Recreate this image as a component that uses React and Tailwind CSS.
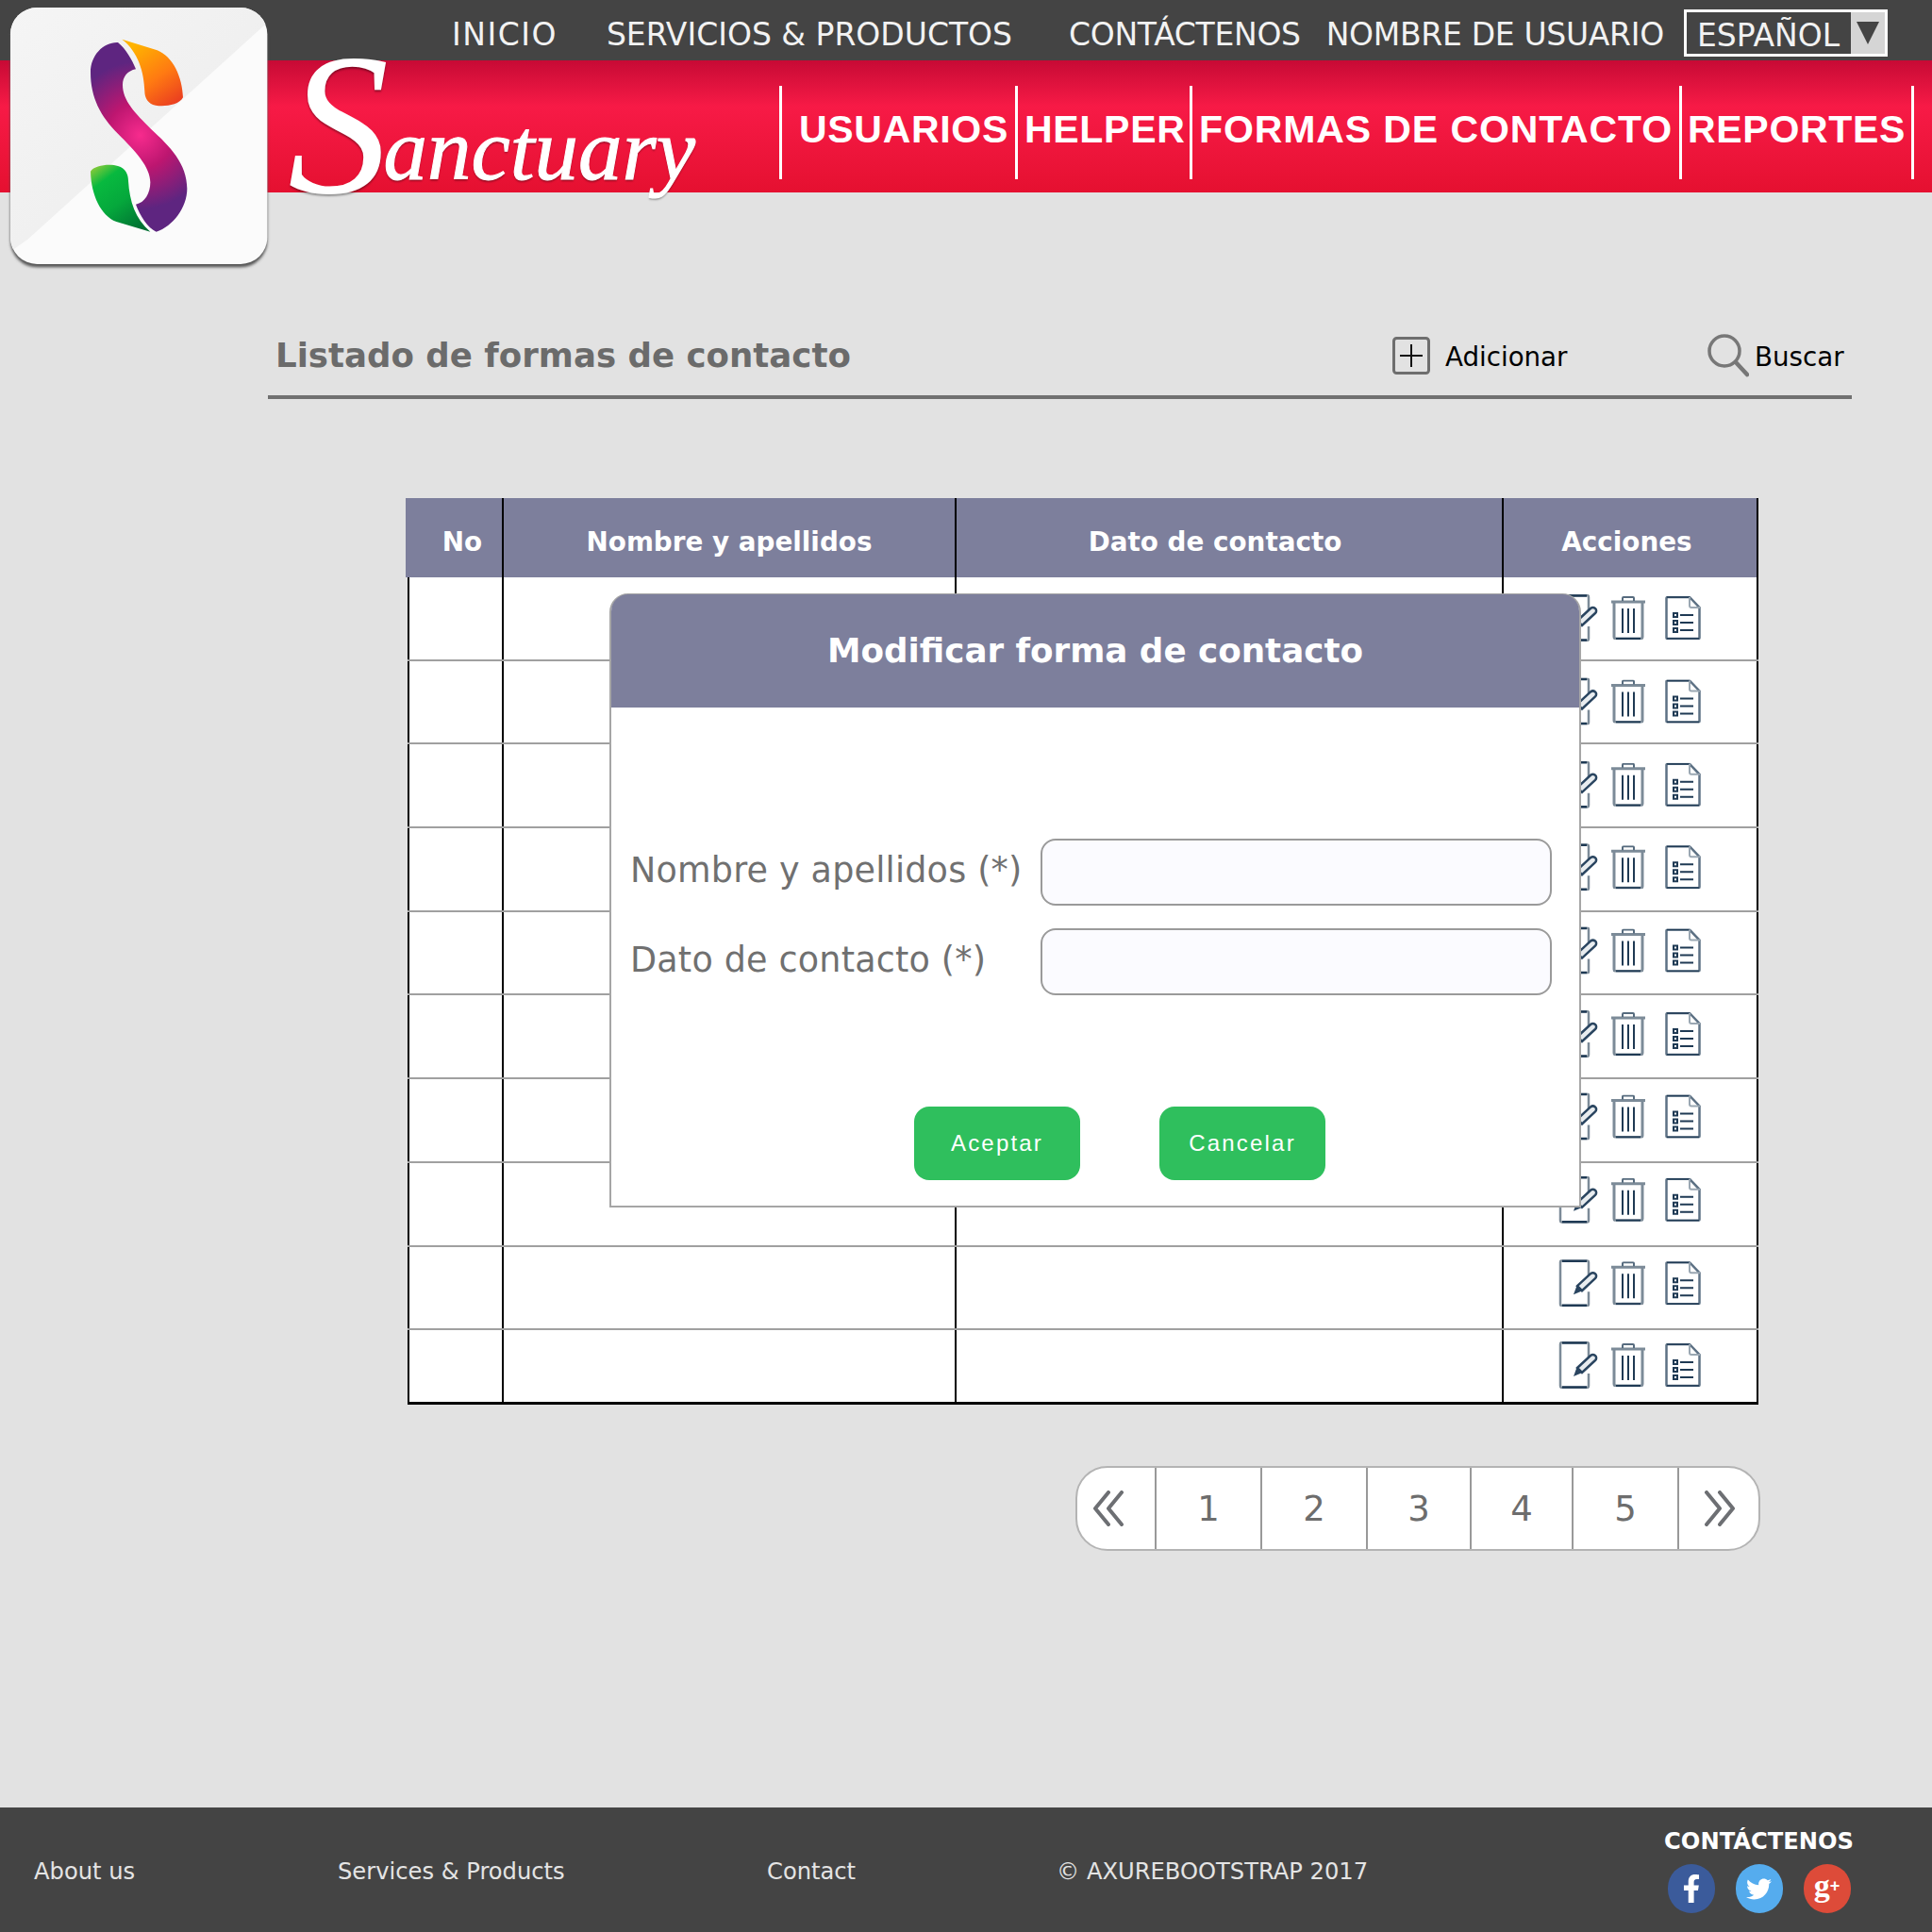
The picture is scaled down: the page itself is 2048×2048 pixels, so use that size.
import React from 'react';
import { FaFacebookF, FaTwitter } from 'react-icons/fa';

const rows = [0, 1, 2, 3, 4, 5, 6, 7, 8];

const LogoMark = () => (
  <svg viewBox="0 0 900 900" className="absolute left-0 top-0 w-[300px] h-[300px]">
    <defs>
      <radialGradient id="ribbon" gradientUnits="userSpaceOnUse" cx="445" cy="430" r="235">
        <stop offset="0" stopColor="#f72b8d" />
        <stop offset="0.45" stopColor="#bd1670" />
        <stop offset="1" stopColor="#5e2580" />
      </radialGradient>
      <linearGradient id="orange" x1="0.25" y1="0.05" x2="0.85" y2="1">
        <stop offset="0" stopColor="#ffb400" />
        <stop offset="0.55" stopColor="#ff7a12" />
        <stop offset="1" stopColor="#ea3d20" />
      </linearGradient>
      <linearGradient id="green" x1="0.15" y1="0" x2="0.8" y2="1">
        <stop offset="0" stopColor="#7cc83a" />
        <stop offset="0.2" stopColor="#08b93f" />
        <stop offset="0.55" stopColor="#05a83c" />
        <stop offset="1" stopColor="#006e32" />
      </linearGradient>
      <linearGradient id="shade" x1="0" y1="0" x2="0.6" y2="0.6">
        <stop offset="0" stopColor="#f5f5f5" />
        <stop offset="1" stopColor="#efefef" />
      </linearGradient>
      <clipPath id="card">
        <rect x="33" y="24" width="817" height="816" rx="85" />
      </clipPath>
      <filter id="soft" x="-5%" y="-5%" width="110%" height="110%">
        <feGaussianBlur stdDeviation="5" />
      </filter>
    </defs>
    <rect x="33" y="34" width="817" height="816" rx="85" fill="#555555" filter="url(#soft)" />
    <rect x="33" y="24" width="817" height="816" rx="85" fill="#fbfbfb" />
    <polygon points="33,24 850,24 850,72 90,760 33,800" fill="url(#shade)" clipPath="url(#card)" />
    <path d="M375 135C400 155 420 190 432 220C405 225 390 245 390 270C390 320 430 360 480 410C540 465 595 520 595 600C595 660 550 720 497 737C470 725 445 685 432 650C460 645 478 615 478 580C478 530 430 480 375 425C320 370 288 310 288 230C288 175 330 133 375 135Z" fill="url(#ribbon)" />
    <path d="M388 125L500 160C550 180 580 245 582 310C570 335 520 340 495 335C470 330 460 310 460 290C458 230 440 165 388 125Z" fill="url(#orange)" />
    <path d="M478 737L370 705C320 685 290 620 288 545C300 525 350 520 375 528C400 535 408 555 408 575C412 640 430 695 478 737Z" fill="url(#green)" />
  </svg>
);

const EditIcon = () => (
  <svg viewBox="0 0 44 50" className="w-[44px] h-[50px]" fill="none">
    <path d="M32 17V3a2 2 0 0 0-2-2H4a2 2 0 0 0-2 2v44a2 2 0 0 0 2 2h26a2 2 0 0 0 2-2V34" stroke="#7c8b98" strokeWidth="2.500" />
    <path d="M4 1.500h26M4 48.500h26" stroke="#1f3a54" strokeWidth="2.500" />
    <path d="M20 28l14-13c1.500-1.200 3.500-1.200 5 0s1.500 3.500 0 5L25 33z" fill="#e8ecef" stroke="#2a4560" strokeWidth="2.500" />
    <path d="M16 37l3.500-9.500 6 5.500z" fill="#2a4560" />
  </svg>
);

const TrashIcon = () => (
  <svg viewBox="0 0 36 46" className="w-[36px] h-[46px]" fill="none">
    <path d="M0 6h36" stroke="#7c8b98" strokeWidth="3" />
    <path d="M12 5V2a1 1 0 0 1 1-1h10a1 1 0 0 1 1 1v3" stroke="#566b7e" strokeWidth="2" />
    <path d="M3 6v37a2 2 0 0 0 2 2h26a2 2 0 0 0 2-2V6" stroke="#7c8b98" strokeWidth="3" />
    <path d="M5 45h26" stroke="#1f3a54" strokeWidth="2" />
    <path d="M12 13v26M18 13v26M24 13v26" stroke="#1f3a54" strokeWidth="2" />
  </svg>
);

const DocIcon = () => (
  <svg viewBox="0 0 38 46" className="w-[38px] h-[46px]" fill="none">
    <path d="M1.500 2v42a1 1 0 0 0 1 1h33a1 1 0 0 0 1-1V12L26 1H2.500a1 1 0 0 0-1 1z" stroke="#5d7184" strokeWidth="2.500" />
    <path d="M2 45h34M2 1h24" stroke="#1f3a54" strokeWidth="1.500" />
    <path d="M26 1v9a2 2 0 0 0 2 2h9" stroke="#9aa7b2" strokeWidth="2" />
    <path d="M9 18h4v4H9zM9 26h4v4H9zM9 34h4v4H9z" stroke="#1f3a54" strokeWidth="2" />
    <path d="M16 20h14M16 28h14M16 36h14" stroke="#1f3a54" strokeWidth="2" />
  </svg>
);

const RowIcons = ({ shift }) => (
  <div className="flex items-center pl-[58px]" style={{ transform: `translateY(${shift}px)` }}>
    <EditIcon />
    <div className="ml-[12px]"><TrashIcon /></div>
    <div className="ml-[21px]"><DocIcon /></div>
  </div>
);

const Row = ({ index, last }) => (
  <div className={`ml-[2px] grid grid-cols-[102px_480px_580px_270px] ${last ? 'h-[79px] border-b-[3px] border-black' : 'h-[88.700px] border-b-2 border-[#a0a0a0]'}`}>
    <div className="border-l-2 border-r-2 border-black bg-white" />
    <div className="border-r-2 border-black bg-white" />
    <div className="border-r-2 border-black bg-white" />
    <div className="border-r-2 border-black bg-white flex items-center">
      <RowIcons shift={last ? -1 : -0.6 * index} />
    </div>
  </div>
);

const Field = ({ label }) => (
  <div className="flex items-center h-[71px]">
    <span className="w-[455px] pl-[20px] pb-[3px] text-[36.500px] tracking-[0.200px] text-[#707070] whitespace-nowrap">{label}</span>
    <div className="w-[542px] h-[71px] rounded-[16px] border-2 border-[#9a9a9a] bg-[#fbfbff]" />
  </div>
);

const Modal = () => (
  <div className="absolute left-[216px] top-[101px] w-[1030px] h-[651px] bg-white border-2 border-[#a6a6a6] rounded-t-[20px]">
    <div className="h-[120px] -mt-px bg-[#7d7f9c] rounded-t-[18px] flex items-center justify-center">
      <span className="text-[35.700px] font-bold text-white">Modificar forma de contacto</span>
    </div>
    <div className="flex flex-col gap-[24px] pt-[139px]">
      <Field label="Nombre y apellidos (*)" />
      <Field label="Dato de contacto (*)" />
    </div>
    <div className="flex pt-[118px] pl-[321px] gap-[84px]">
      <button className="w-[176px] h-[78px] rounded-[16px] bg-[#2fbf5d] text-white text-[24px] tracking-[2.200px] font-['Liberation_Sans',sans-serif]">Aceptar</button>
      <button className="w-[176px] h-[78px] rounded-[16px] bg-[#2fbf5d] text-white text-[24px] tracking-[2.200px] font-['Liberation_Sans',sans-serif]">Cancelar</button>
    </div>
  </div>
);

const Pager = () => (
  <div className="ml-[1140px] mt-[65px] w-[726px] h-[90px] grid grid-cols-[82px_112px_112px_110px_108px_112px_86px] bg-white border-2 border-[#b4b4b4] rounded-[34px] text-[37px] text-[#6d6d6d]">
    <div className="flex items-center pl-[15px]">
      <svg viewBox="0 0 36 38" className="w-[36px] h-[38px]" fill="none" stroke="#6d6f73" strokeWidth="4" strokeLinecap="round" strokeLinejoin="round">
        <path d="M18 2L4 19l14 17M32 2L18 19l14 17" />
      </svg>
    </div>
    {['1', '2', '3', '4', '5'].map((n) => (
      <div key={n} className="border-l-2 border-[#999999] flex items-center justify-center pt-[2px]">{n}</div>
    ))}
    <div className="border-l-2 border-[#999999] flex items-center pl-[25px]">
      <svg viewBox="0 0 36 38" className="w-[36px] h-[38px]" fill="none" stroke="#6d6f73" strokeWidth="4" strokeLinecap="round" strokeLinejoin="round">
        <path d="M4 2l14 17L4 36M18 2l14 17-14 17" />
      </svg>
    </div>
  </div>
);

export default function App() {
  return (
    <div className="relative min-h-[2048px] flex flex-col bg-[#e2e2e2] font-['DejaVu_Sans',sans-serif]">
      <div className="h-[64px] bg-[#444444] flex items-center pl-[479px] text-[33px] text-[#f2f2f2] whitespace-nowrap">
        <span className="mt-[10px] tracking-[1.500px]">INICIO</span>
        <span className="mt-[10px] ml-[52px]">SERVICIOS &amp; PRODUCTOS</span>
        <span className="mt-[10px] ml-[60px] tracking-[-0.300px]">CONTÁCTENOS</span>
        <span className="mt-[10px] ml-[27px] tracking-[-0.300px]">NOMBRE DE USUARIO</span>
        <div className="ml-[21px] mt-[6px] w-[216px] h-[50px] border-[3px] border-white flex items-center">
          <span className="pl-[11px] pt-[5px] w-[172px]">ESPAÑOL</span>
          <div className="w-[38px] h-full bg-[#d5d5d5] border-l-2 border-[#444444] flex items-center justify-center">
            <svg viewBox="0 0 26 26" className="w-[26px] h-[26px]"><path d="M1 1h24L13 25z" fill="#444444" /></svg>
          </div>
        </div>
      </div>

      <div className="h-[140px] bg-gradient-to-b from-[#c70a35] via-[#f71a46] via-35% to-[#e51030] flex items-start whitespace-nowrap">
        <div className="w-[826px] h-[140px] -mt-[24px] pl-[305px] text-white italic font-['Liberation_Serif',serif] text-[93px] leading-none [-webkit-text-stroke:1px_white] [text-shadow:0_2px_2px_rgba(0,0,0,0.35)]">
          <span className="inline-block text-[215px] -mt-[30px] -mr-[6px] translate-y-[14px] [-webkit-text-stroke:0]">S</span>anctuary
        </div>
        <nav className="flex mt-[27px] h-[99px] text-white font-bold text-[41px] tracking-[0.700px] font-['Liberation_Sans',sans-serif]">
          <div className="w-[250px] pb-[5px] border-l-[3px] border-white flex items-center pl-[18px]">USUARIOS</div>
          <div className="w-[185px] pb-[5px] border-l-[3px] border-white flex items-center pl-[7px]">HELPER</div>
          <div className="w-[519px] pb-[5px] border-l-[3px] border-white flex items-center pl-[7px] tracking-[0.900px]">FORMAS DE CONTACTO</div>
          <div className="w-[249px] pb-[5px] border-x-[3px] border-white flex items-center pl-[6px]">REPORTES</div>
        </nav>
      </div>

      <LogoMark />

      <main className="flex-1">
        <div className="ml-[284px] mt-[136px] w-[1679px] h-[83px] border-b-4 border-[#707070] flex items-center pl-[8px] pb-[5px]">
          <h1 className="w-[1184px] text-[35.600px] font-bold text-[#6b6b6b]">Listado de formas de contacto</h1>
          <svg viewBox="0 0 40 40" className="w-[40px] h-[40px]" fill="none">
            <rect x="1.500" y="1.500" width="37" height="37" rx="3" stroke="#6e6e6e" strokeWidth="3" />
            <path d="M20 8v24M8 20h24" stroke="#111111" strokeWidth="2" />
          </svg>
          <span className="ml-[16px] w-[278px] pt-[4px] text-[27.700px] text-black">Adicionar</span>
          <svg viewBox="0 0 44 46" className="w-[44px] h-[46px]" fill="none" stroke="#777777" strokeWidth="3.500">
            <circle cx="18" cy="18" r="16" />
            <path d="M30 30l12 13" strokeWidth="4.500" strokeLinecap="round" />
          </svg>
          <span className="ml-[6px] pt-[4px] text-[27.700px] text-black">Buscar</span>
        </div>

        <div className="relative ml-[430px] mt-[105px] w-[1434px]">
          <div className="grid grid-cols-[104px_480px_580px_270px] h-[84px] bg-[#7d7f9c] text-white font-bold text-[27.800px]">
            <div className="border-r-2 border-black flex items-center justify-center pt-[9px] pl-[18px]">No</div>
            <div className="border-r-2 border-black flex items-center justify-center pt-[9px]">Nombre y apellidos</div>
            <div className="border-r-2 border-black flex items-center justify-center pt-[9px] pr-[30px]">Dato de contacto</div>
            <div className="border-r-2 border-black flex items-center justify-center pt-[9px] pr-[7px]">Acciones</div>
          </div>
          {rows.map((r) => <Row key={r} index={r} />)}
          <Row last />
          <Modal />
        </div>

        <Pager />
      </main>

      <footer className="relative h-[132px] bg-[#444444] flex items-center pt-[4px] text-[24.200px] text-[#e4e4e4] whitespace-nowrap">
        <span className="ml-[36px] w-[322px]">About us</span>
        <span className="w-[455px]">Services &amp; Products</span>
        <span className="w-[307px]">Contact</span>
        <span>© AXUREBOOTSTRAP 2017</span>
        <div className="ml-auto mr-[83px] mb-[6px] flex flex-col items-center gap-[6px]">
          <span className="font-bold text-white">CONTÁCTENOS</span>
          <div className="flex gap-[22px]">
            <div className="w-[50px] h-[52px] rounded-full bg-[#3b5b9b] flex items-center justify-center text-white text-[30px]"><FaFacebookF /></div>
            <div className="w-[50px] h-[52px] rounded-full bg-[#55acee] flex items-center justify-center text-white text-[27px]"><FaTwitter /></div>
            <div className="w-[50px] h-[52px] rounded-full bg-[#dd4b39] flex items-center justify-center text-white font-bold font-['Liberation_Serif',serif] text-[34px] leading-none pb-[6px]">g<span className="text-[18px] font-['Liberation_Sans',sans-serif]">+</span></div>
          </div>
        </div>
      </footer>
    </div>
  );
}
